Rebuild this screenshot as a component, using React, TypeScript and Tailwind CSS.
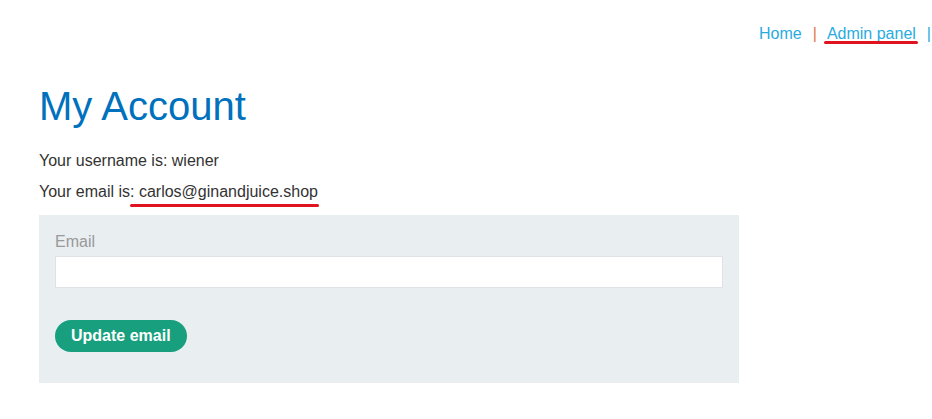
import React from 'react';

const App: React.FC = () => {
  return (
    <div className="min-h-[419px] w-[932px] bg-white font-['Liberation_Sans',Arial,sans-serif] text-[16px] text-[#333332]">
      {/* Top nav */}
      <header className="flex justify-end pt-[24px] pr-[1px] leading-[20px]">
        <a className="text-[#29abe0]">Home</a>
        <span className="pl-[11px] pr-[10px] text-[#e4773d]">|</span>
        <span className="relative text-[#29abe0]">
          {' '}Admin panel
          <span className="absolute left-[-3px] right-[-2px] top-[17px] h-[3px] rounded-full bg-[#e0141e]" />
        </span>
        <span className="pl-[11px] text-[#29abe0]">|</span>
      </header>

      <main className="px-[39px]">
        <h1 className="mt-[38px] text-[40px] leading-[48px] text-[#0071bc]">My Account</h1>

        <p className="mt-[21px] leading-[20px]">Your username is: wiener</p>
        <p className="mt-[11px] leading-[20px]">
          Your email is:
          <span className="relative">
            {' '}carlos@ginandjuice.shop
            <span className="absolute left-[-4px] right-[-1px] top-[21px] h-[3px] rounded-full bg-[#e0141e]" />
          </span>
        </p>

        <form className="mt-[13px] w-[700px] bg-[#e9eef1] px-[16px] pt-[18px] pb-[31px]">
          <label className="block leading-[18px] text-[#999999]">Email</label>
          <input
            type="text"
            className="mt-[5px] block h-[32px] w-[668px] border border-[#dfe3e6] bg-white"
          />
          <button
            type="button"
            className="mt-[32px] h-[32px] rounded-full bg-[#189f7e] px-[16px] font-bold text-white"
          >
            Update email
          </button>
        </form>
      </main>
    </div>
  );
};

export default App;
